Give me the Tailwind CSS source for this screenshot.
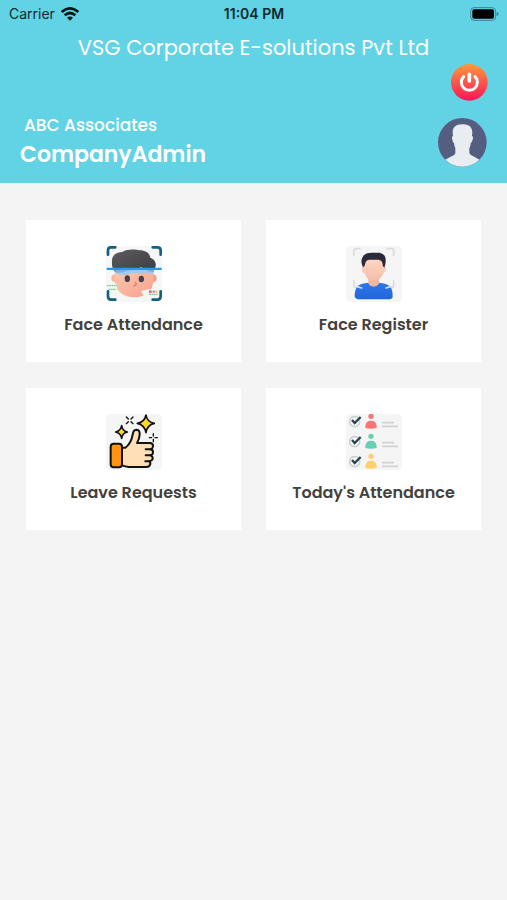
<!DOCTYPE html>
<html lang="en">
<head>
    <meta charset="UTF-8">
    <meta name="viewport" content="width=device-width, initial-scale=1.0">
    <title>Company Admin</title>
    <script src="https://cdn.jsdelivr.net/npm/@tailwindcss/browser@4"></script>
</head>
<body class="min-h-screen bg-[#f4f4f4] font-['Poppins','Inter',sans-serif]">
    <header class="bg-[#62d3e4] text-white pb-3">
        <!-- Status bar -->
        <div class="grid grid-cols-3 items-center h-7 pl-[9px] pr-2 font-['Inter',sans-serif] text-sm text-[#10292d]">
            <div class="flex items-center gap-[6px]">
                <span>Carrier</span>
                <svg class="w-[18px] h-[14px]" viewBox="0 0 54 42" fill="none" stroke="#05191c" stroke-width="8">
                    <path d="M2 15Q27-7 52 15"/>
                    <path d="M11 25Q27 11 43 25"/>
                    <path d="M18 32Q27 25 36 32L27 41Z" fill="#05191c" stroke="none"/>
                </svg>
            </div>
            <span class="text-center font-semibold">11:04 PM</span>
            <svg class="justify-self-end w-[29px] h-[14px]" viewBox="0 0 87 42">
                <rect x="2" y="2" width="75" height="38" rx="10" fill="none" stroke="#3b8591" stroke-width="3"/>
                <rect x="7" y="7" width="65" height="28" rx="5" fill="#000"/>
                <path d="M80 15Q86 17 86 21T80 27Z" fill="#3b8591"/>
            </svg>
        </div>
        <h1 class="mt-1 text-center text-[21px] leading-8">VSG Corporate E-solutions Pvt Ltd</h1>
        <div class="flex justify-end pr-[19px]">
            <button type="button" aria-label="Log out">
                <svg class="block w-[37px] h-[37px]" viewBox="0 0 111 111">
                    <defs>
                        <linearGradient id="power" x1="0" y1="0" x2="0" y2="1">
                            <stop offset="0" stop-color="#fb9a3c"/>
                            <stop offset="1" stop-color="#fb1458"/>
                        </linearGradient>
                    </defs>
                    <circle cx="55" cy="55" r="55" fill="url(#power)"/>
                    <g fill="none" stroke="#fff" stroke-width="9" stroke-linecap="round">
                        <path d="M38 38A24 24 0 1 0 72 38"/>
                        <path d="M55 31V51" stroke-width="11"/>
                    </g>
                </svg>
            </button>
        </div>
        <div class="flex items-center justify-between mt-3 px-5">
            <div>
                <p class="pl-1 text-[17px] leading-6 font-medium">ABC Associates</p>
                <p class="mt-[2px] text-[22px] leading-8 font-semibold">CompanyAdmin</p>
            </div>
            <svg class="w-[49px] h-[49px]" viewBox="0 0 147 147">
                <defs>
                    <clipPath id="round"><circle cx="73" cy="73" r="73"/></clipPath>
                </defs>
                <g clip-path="url(#round)">
                    <path fill="#555e80" d="M0 0H147V147H0Z"/>
                    <path fill="#e8edf1" d="M73 19C91 18 103 27 103 43L102 54Q107 56 104 65Q101 75 98 76Q98 86 94 90V104Q95 110 106 115L126 126V147H20V126L41 115Q52 110 52 104V90Q49 86 48 76Q45 75 43 65Q40 56 45 54L44 43C44 28 53 19 73 19Z"/>
                </g>
            </svg>
        </div>
    </header>

    <main class="grid grid-cols-2 gap-x-[25px] gap-y-[26px] px-[26px] pt-[37px] text-base leading-6 font-semibold text-[#43413c]">
        <button type="button" class="flex flex-col items-center bg-white pt-[26px] pb-[25px]">
            <svg class="w-14 h-14" viewBox="18 18 168 168">
                <defs>
                    <linearGradient id="skin" x1="0" y1="0" x2="1" y2="1">
                        <stop offset="0" stop-color="#ffc9ae"/>
                        <stop offset="1" stop-color="#f5a290"/>
                    </linearGradient>
                    <linearGradient id="hair" x1="0" y1="0" x2="1" y2="1">
                        <stop offset="0" stop-color="#5c5c60"/>
                        <stop offset="1" stop-color="#3c3c40"/>
                    </linearGradient>
                </defs>
                <rect x="18" y="18" width="168" height="168" rx="14" fill="#f5f6f6"/>
                <circle cx="46" cy="115" r="12" fill="#fbb69e"/>
                <circle cx="158" cy="115" r="12" fill="#f5a08e"/>
                <path fill="url(#skin)" d="M44 86H160V116C162 150 138 172 104 172S44 152 44 116Z"/>
                <path fill="url(#hair)" d="M46 96Q34 84 36 62C36 43 52 36 67 36C80 27 104 27 119 31C137 31 149 40 151 53C165 58 170 70 166 82L160 97Q142 94 124 82Q104 93 84 91Q62 103 46 96Z"/>
                <path fill="#8bcdfb" opacity=".8" d="M44 90H164L158 103Q140 96 124 101Q98 97 80 104Q60 107 48 99Z"/>
                <path fill="#1e9cf5" d="M20 83H185V90H20Z"/>
                <ellipse cx="82" cy="116" rx="8" ry="10" fill="#444248"/>
                <ellipse cx="124" cy="117" rx="8" ry="10" fill="#444248"/>
                <path fill="none" stroke="#e07f72" stroke-width="5" stroke-linecap="round" d="M107 128Q112 134 102 138"/>
                <path fill="#f5f6f6" d="M123 153L145 148H176V168H132ZM20 133H51V151H20Z"/>
                <path stroke="#54bf75" stroke-width="3" stroke-dasharray="5 2" d="M21 137H51M26 148H49M148 163H173"/>
                <path stroke="#ef4f82" stroke-width="7" d="M147 155H155"/>
                <path stroke="#b264c8" stroke-width="6" d="M158 155H164"/>
                <path stroke="#f6b642" stroke-width="6" d="M166 155H172"/>
                <path fill="none" stroke="#13617b" stroke-width="8" stroke-linecap="round" d="M24 44V31Q24 22 33 22H46M158 22H172Q182 22 182 31V44M24 154V169Q24 179 33 179H46M158 179H172Q182 179 182 169V154"/>
            </svg>
            <span class="mt-[11px]">Face Attendance</span>
        </button>

        <button type="button" class="flex flex-col items-center bg-white pt-[26px] pb-[25px]">
            <svg class="w-14 h-14" viewBox="18 18 168 168">
                <defs>
                    <linearGradient id="shirt" x1="0" y1="0" x2="0" y2="1">
                        <stop offset="0" stop-color="#2f78e6"/>
                        <stop offset="1" stop-color="#1f66dc"/>
                    </linearGradient>
                    <linearGradient id="face" x1="0" y1="0" x2="0" y2="1">
                        <stop offset="0" stop-color="#ffd6c2"/>
                        <stop offset="1" stop-color="#f3bda8"/>
                    </linearGradient>
                </defs>
                <rect x="18" y="18" width="168" height="168" rx="14" fill="#f5f5f5"/>
                <path fill="none" stroke="#d9dbdc" stroke-width="5" d="M42 49V33Q42 26 49 26H63M140 26H154Q161 26 161 33V49M42 121V136Q42 143 49 143H60M142 143H154Q161 143 161 136V121"/>
                <path fill="url(#shirt)" d="M44 169Q43 149 54 137Q64 130 84 128H118Q140 130 149 138Q159 148 158 171Q157 177 149 178H53Q45 177 44 169Z"/>
                <path fill="#f0b6a2" d="M85 114H117V130Q112 140 101 140T85 130Z"/>
                <path fill="url(#face)" d="M70 79Q62 80 66 92Q68 100 75 101Q80 121 101 123Q122 121 129 101Q135 99 137 91Q139 80 132 79L124 57H76Z"/>
                <path fill="#292a3b" d="M69 82Q60 64 68 51Q73 38 96 38H119Q137 42 137 60Q138 71 133 83Q127 79 127 68Q125 61 116 59H87Q77 61 76 70Q75 79 69 82Z"/>
                <path stroke="#cce0ff" stroke-width="5" stroke-linecap="round" d="M51 140L65 144M138 144L151 140"/>
            </svg>
            <span class="mt-[11px]">Face Register</span>
        </button>

        <button type="button" class="flex flex-col items-center bg-white pt-[26px] pb-[25px]">
            <svg class="w-14 h-14" viewBox="18 18 168 168">
                <rect x="18" y="18" width="168" height="168" rx="14" fill="#f5f5f5"/>
                <g stroke="#111" stroke-width="6" stroke-linejoin="round" stroke-linecap="round">
                    <path fill="#ffdfb5" d="M66 119H76Q86 113 94 95L100 72Q102 65 110 65Q120 66 119 80Q118 94 111 105H151Q160 107 159 115Q158 122 152 124Q160 126 159 134Q158 141 152 142Q159 145 158 153Q156 159 148 160Q153 164 150 171Q147 177 139 177H86Q76 176 66 172Z"/>
                    <path fill="none" d="M137 124H152M137 142H152M136 160H148"/>
                    <path fill="#ff9411" d="M41 107H57Q66 107 66 116V169Q66 178 57 178H41Q32 178 32 169V116Q32 107 41 107Z"/>
                    <path fill="#ffdc24" stroke-width="5" d="M138 21Q141 42 163 46Q141 51 138 74Q134 51 112 46Q134 42 138 21Z"/>
                    <path fill="#ffdc24" stroke-width="5" d="M65 53Q67 69 82 72Q67 75 65 91Q62 75 47 72Q62 69 65 53Z"/>
                    <path fill="none" stroke-width="4" d="M79 27L85 33M99 27L93 33M79 47L85 41M99 47L93 41M160 77V84M160 94V101M148 89H155M165 89H172"/>
                </g>
            </svg>
            <span class="mt-[11px]">Leave Requests</span>
        </button>

        <button type="button" class="flex flex-col items-center bg-white pt-[26px] pb-[25px]">
            <svg class="w-14 h-14" viewBox="18 18 168 168">
                <defs>
                    <clipPath id="tile"><rect x="18" y="18" width="168" height="168" rx="14"/></clipPath>
                    <g id="row">
                        <circle cx="44" cy="41" r="15" fill="#fafafa" stroke="#c8d2d4" stroke-width="5"/>
                        <path d="M36 36L44 45L62 27" fill="none" stroke="#29444b" stroke-width="7"/>
                        <circle cx="93" cy="25" r="8" fill="currentColor"/>
                        <path d="M76 60V54Q78 38 93 38T110 54V60Q93 65 76 60Z" fill="currentColor"/>
                        <path d="M126 44H162M126 55H174" stroke="#d1d2d3" stroke-width="5"/>
                    </g>
                </defs>
                <g clip-path="url(#tile)">
                    <path fill="#f5f5f5" d="M18 18H186V186H18Z"/>
                    <use href="#row" class="text-[#fa7578]"/>
                    <use href="#row" y="60" class="text-[#68cfb1]"/>
                    <use href="#row" y="120" class="text-[#fdd06d]"/>
                </g>
            </svg>
            <span class="mt-[11px]">Today's Attendance</span>
        </button>
    </main>
</body>
</html>
